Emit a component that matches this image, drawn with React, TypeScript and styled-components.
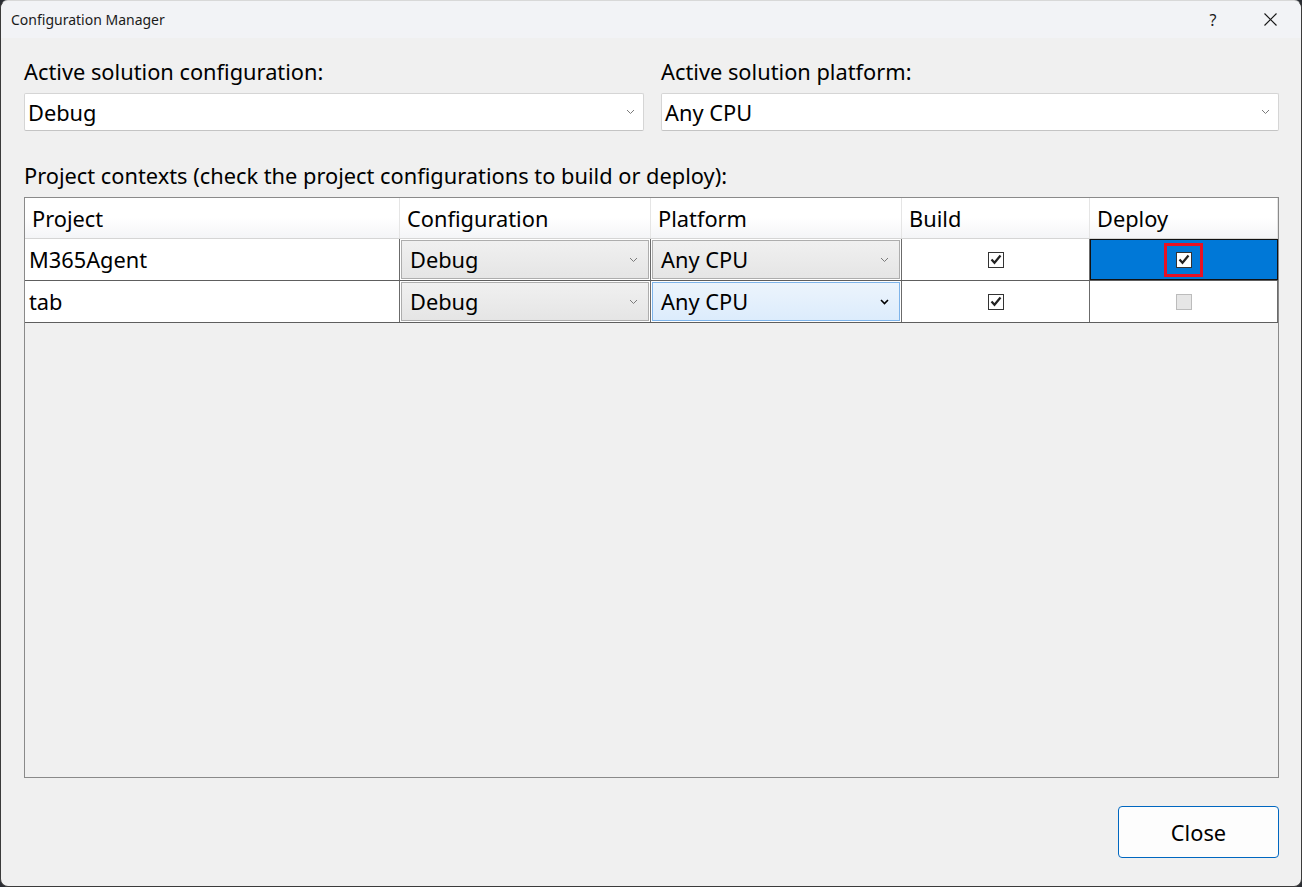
import React from "react";
import styled, { createGlobalStyle, css } from "styled-components";

const Global = createGlobalStyle`
  html, body { margin: 0; padding: 0; background: #2a2d33; }
  body { width: 1302px; height: 887px; overflow: hidden; font-family: "Noto Sans", "Segoe UI", sans-serif; }
  * { box-sizing: border-box; }
`;

const Window = styled.div`
  width: 1302px;
  height: 887px;
  display: flex;
  flex-direction: column;
  background: #f0f0f0;
  border: 1px solid #3b3b3b;
  border-top-color: #d8d8d8;
  border-radius: 8px;
  overflow: hidden;
  color: #000;
`;

const TitleBar = styled.div`
  height: 37px;
  flex: none;
  display: flex;
  align-items: center;
  padding-left: 10px;
  background: #f2f3f6;
`;

const Title = styled.div`
  flex: 1;
  font-size: 14px;
  color: #1a1a1a;
`;

const TitleButton = styled.div<{ $w: number }>`
  width: ${(p) => p.$w}px;
  height: 37px;
  display: flex;
  align-items: center;
  justify-content: center;
  font-size: 16px;
  color: #1a1a1a;
`;

const Body = styled.div`
  flex: 1;
  display: flex;
  flex-direction: column;
  padding: 20px 22px 28px 23px;
`;

const TopRow = styled.div`
  display: grid;
  grid-template-columns: 620px 1fr;
  column-gap: 17px;
`;

const Field = styled.div`
  display: flex;
  flex-direction: column;
  gap: 8px;
`;

const Label = styled.div`
  font-size: 21.8px;
  line-height: 27px;
  height: 27px;
  white-space: nowrap;
`;

const Combo = styled.div`
  height: 38px;
  display: flex;
  align-items: center;
  padding: 0 8px 0 3px;
  background: #fff;
  border: 1px solid #d5d5d5;
  border-bottom-color: #c4c4c4;
  border-radius: 2px;
  font-size: 21.8px;
`;

const ComboText = styled.span`
  flex: 1;
`;

const SectionLabel = styled(Label)`
  margin-top: 31px;
  margin-bottom: 8px;
`;

const Grid = styled.div`
  flex: 1;
  background: #f0f0f0;
  border: 1px solid #8a8a8a;
  display: flex;
  flex-direction: column;
`;

const COLS = "375px 251px 251px 188px 188px";

const HeaderRow = styled.div`
  display: grid;
  grid-template-columns: ${COLS};
  height: 41px;
  background: linear-gradient(#ffffff, #ffffff 50%, #f4f5f7);
  border-bottom: 1px solid #d5d5d5;
`;

const HeaderCell = styled.div`
  display: flex;
  align-items: center;
  padding-left: 7px;
  font-size: 21.8px;
  border-right: 1px solid #e5e5e5;
`;

const DataRow = styled.div`
  display: grid;
  grid-template-columns: ${COLS};
  height: 42px;
  border-bottom: 1px solid #5e5e5e;
`;

const Cell = styled.div<{ $selected?: boolean; $center?: boolean }>`
  display: flex;
  align-items: center;
  background: #fff;
  border-right: 1px solid #6b6b6b;
  font-size: 21.8px;
  padding: ${(p) => (p.$center ? "0" : "0 0 0 4px")};
  justify-content: ${(p) => (p.$center ? "center" : "flex-start")};
  ${(p) =>
    p.$selected &&
    css`
      background: #0078d7;
      outline: 1px solid #111;
      outline-offset: -1px;
    `}
`;

const ComboCell = styled.div`
  display: flex;
  align-items: stretch;
  background: #fff;
  border-right: 1px solid #6b6b6b;
  padding: 1px;
`;

const CellCombo = styled.div<{ $hover?: boolean }>`
  flex: 1;
  display: flex;
  align-items: center;
  padding: 0 10px 0 8px;
  font-size: 21.8px;
  border: 1px solid ${(p) => (p.$hover ? "#7eb4ea" : "#adadad")};
  background: ${(p) =>
    p.$hover ? "linear-gradient(#ecf4fc, #dcecfc)" : "linear-gradient(#f0f0f0, #e5e5e5)"};
`;

const Highlight = styled.div`
  width: 39px;
  height: 34px;
  border: 3.5px solid #e81123;
  display: flex;
  align-items: center;
  justify-content: center;
`;

const Box = styled.div<{ $disabled?: boolean }>`
  width: 16px;
  height: 16px;
  border: 1px solid ${(p) => (p.$disabled ? "#bcbcbc" : "#333")};
  background: ${(p) => (p.$disabled ? "#e6e6e6" : "#fff")};
  display: flex;
  align-items: center;
  justify-content: center;
`;

const Footer = styled.div`
  display: flex;
  justify-content: flex-end;
  padding-top: 28px;
`;

const Button = styled.button`
  width: 161px;
  height: 52px;
  background: #fdfdfd;
  border: 1px solid #0067c0;
  border-radius: 4px;
  font-family: "Noto Sans", "Segoe UI", sans-serif;
  font-size: 21.8px;
  color: #000;
  padding: 0;
`;

const Chevron = ({ dark }: { dark?: boolean }) => (
  <svg width="9" height="6" viewBox="0 0 9 6">
    <polyline
      points="1,1 4.5,4.5 8,1"
      fill="none"
      stroke={dark ? "#000" : "#7a7a7a"}
      strokeWidth={dark ? 1.6 : 1}
    />
  </svg>
);

const Check = ({ disabled }: { disabled?: boolean }) => (
  <Box $disabled={disabled}>
    {!disabled && (
      <svg width="12" height="11" viewBox="0 0 12 11">
        <polyline points="1.5,5.5 4.5,8.8 10.5,1.5" fill="none" stroke="#222" strokeWidth="2.2" />
      </svg>
    )}
  </Box>
);

const CloseIcon = () => (
  <svg width="13" height="13" viewBox="0 0 13 13">
    <path d="M0.5 0.5 L12.5 12.5 M12.5 0.5 L0.5 12.5" stroke="#1a1a1a" strokeWidth="1.2" />
  </svg>
);

const rows = [
  { name: "M365Agent", config: "Debug", platform: "Any CPU", deploy: "checked" as const, hover: false },
  { name: "tab", config: "Debug", platform: "Any CPU", deploy: "disabled" as const, hover: true },
];

export default function App() {
  return (
    <>
      <Global />
      <Window>
        <TitleBar>
          <Title>Configuration Manager</Title>
          <TitleButton $w={52}>?</TitleButton>
          <TitleButton $w={62}>
            <CloseIcon />
          </TitleButton>
        </TitleBar>
        <Body>
          <TopRow>
            <Field>
              <Label>Active solution configuration:</Label>
              <Combo>
                <ComboText>Debug</ComboText>
                <Chevron />
              </Combo>
            </Field>
            <Field>
              <Label>Active solution platform:</Label>
              <Combo>
                <ComboText>Any CPU</ComboText>
                <Chevron />
              </Combo>
            </Field>
          </TopRow>
          <SectionLabel>Project contexts (check the project configurations to build or deploy):</SectionLabel>
          <Grid>
            <HeaderRow>
              <HeaderCell>Project</HeaderCell>
              <HeaderCell>Configuration</HeaderCell>
              <HeaderCell>Platform</HeaderCell>
              <HeaderCell>Build</HeaderCell>
              <HeaderCell>Deploy</HeaderCell>
            </HeaderRow>
            {rows.map((r) => (
              <DataRow key={r.name}>
                <Cell>{r.name}</Cell>
                <ComboCell>
                  <CellCombo>
                    <ComboText>{r.config}</ComboText>
                    <Chevron />
                  </CellCombo>
                </ComboCell>
                <ComboCell>
                  <CellCombo $hover={r.hover}>
                    <ComboText>{r.platform}</ComboText>
                    <Chevron dark={r.hover} />
                  </CellCombo>
                </ComboCell>
                <Cell $center>
                  <Check />
                </Cell>
                {r.deploy === "checked" ? (
                  <Cell $center $selected>
                    <Highlight>
                      <Check />
                    </Highlight>
                  </Cell>
                ) : (
                  <Cell $center>
                    <Check disabled />
                  </Cell>
                )}
              </DataRow>
            ))}
          </Grid>
          <Footer>
            <Button>Close</Button>
          </Footer>
        </Body>
      </Window>
    </>
  );
}
